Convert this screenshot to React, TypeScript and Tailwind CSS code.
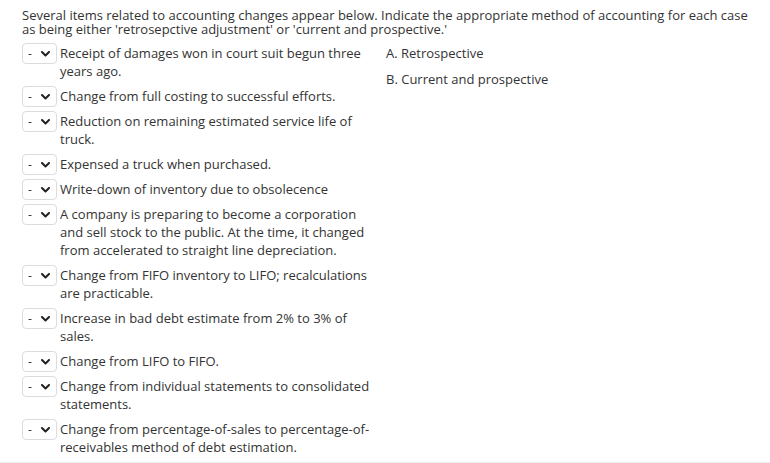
const items = [
  "Receipt of damages won in court suit begun three years ago.",
  "Change from full costing to successful efforts.",
  "Reduction on remaining estimated service life of truck.",
  "Expensed a truck when purchased.",
  "Write-down of inventory due to obsolecence",
  "A company is preparing to become a corporation and sell stock to the public. At the time, it changed from accelerated to straight line depreciation.",
  "Change from FIFO inventory to LIFO; recalculations are practicable.",
  "Increase in bad debt estimate from 2% to 3% of sales.",
  "Change from LIFO to FIFO.",
  "Change from individual statements to consolidated statements.",
  "Change from percentage-of-sales to percentage-of-receivables method of debt estimation.",
];

const options = ["A. Retrospective", "B. Current and prospective"];

function Select() {
  return (
    <div className="flex h-[21px] w-[35px] shrink-0 items-center rounded-[4px] border border-[#dcdcdc] bg-white pl-[5px] pr-[6px]">
      <span className="text-[12px] leading-none text-[#333]">-</span>
      <svg className="ml-auto" width="9" height="6" viewBox="0 0 9 6">
        <polyline
          points="1,1 4.5,4.5 8,1"
          fill="none"
          stroke="#222"
          strokeWidth="2"
          strokeLinecap="round"
          strokeLinejoin="round"
        />
      </svg>
    </div>
  );
}

export default function App() {
  return (
    <div className="flex h-[463px] flex-col bg-white font-['Open_Sans',sans-serif] text-[13px] text-[#333]">
      <div className="flex-1 px-[22px] pt-[8px]">
        <p className="w-[728px] leading-[14px]">
          Several items related to accounting changes appear below. Indicate the appropriate method of
          accounting for each case as being either 'retrosepctive adjustment' or 'current and prospective.'
        </p>
        <div className="mt-[7px] flex">
          <div className="flex flex-col">
            {items.map((text) => (
              <div key={text} className="mb-[4px] flex items-start">
                <Select />
                <div className="ml-[3px] w-[314px] pb-[2px] pt-[1px] leading-[18px]">{text}</div>
              </div>
            ))}
          </div>
          <div className="ml-[12px] flex flex-col gap-[8px] pt-[1px]">
            {options.map((o) => (
              <div key={o} className="leading-[18px]">
                {o}
              </div>
            ))}
          </div>
        </div>
      </div>
      <div className="h-[5px] bg-gradient-to-b from-[#f6f6f6] to-[#e6e6e6]" />
    </div>
  );
}
